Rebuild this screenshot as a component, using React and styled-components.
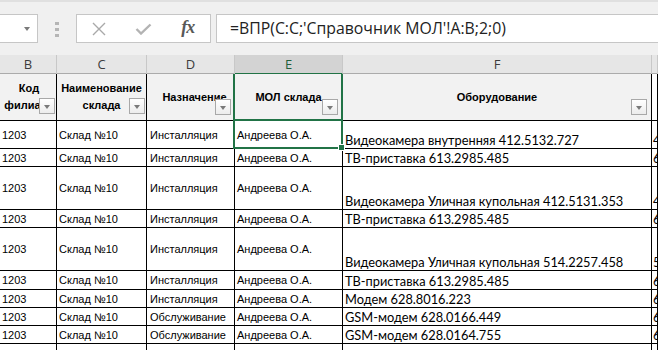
import React from 'react';
import styled, { createGlobalStyle } from 'styled-components';

const GlobalStyle = createGlobalStyle`
  html, body { margin: 0; padding: 0; background: #fff; }
  body {
    width: 658px;
    height: 350px;
    overflow: hidden;
    font-family: "Liberation Sans", Arial, sans-serif;
  }
`;

const COLS = '57px 90px 88px 108px 309px 1fr';
const GREEN = '#217346';

const rows = [
  { h: 28, d: 'Инсталляция', f: 'Видеокамера внутренняя 412.5132.727', g: '4', sel: true },
  { h: 18, d: 'Инсталляция', f: 'ТВ-приставка 613.2985.485', g: '6' },
  { h: 43, d: 'Инсталляция', f: 'Видеокамера Уличная купольная 412.5131.353', g: '4' },
  { h: 18, d: 'Инсталляция', f: 'ТВ-приставка 613.2985.485', g: '6' },
  { h: 43, d: 'Инсталляция', f: 'Видеокамера Уличная купольная 514.2257.458', g: '5' },
  { h: 19, d: 'Инсталляция', f: 'ТВ-приставка 613.2985.485', g: '6' },
  { h: 18, d: 'Инсталляция', f: 'Модем 628.8016.223', g: '6' },
  { h: 18, d: 'Обслуживание', f: 'GSM-модем 628.0166.449', g: '6' },
  { h: 18, d: 'Обслуживание', f: 'GSM-модем 628.0164.755', g: '6' },
];

const Page = styled.div`
  width: 658px;
  height: 350px;
  overflow: hidden;
  display: flex;
  flex-direction: column;
`;

const Toolbar = styled.div`
  display: flex;
  align-items: flex-start;
  height: 55px;
  flex: none;
  box-sizing: border-box;
  padding-top: 12px;
  background: #f0f0f0;
  border-top: 2px solid #e0e0e0;
`;

const NameBox = styled.div`
  margin-left: -1px;
  width: 39px;
  height: 29px;
  box-sizing: border-box;
  background: #fff;
  border: 1px solid #c6c6c6;
  display: flex;
  align-items: center;
  justify-content: flex-end;
  padding-right: 7px;
`;

const Caret = styled.span`
  width: 0;
  height: 0;
  border-left: 3.5px solid transparent;
  border-right: 3.5px solid transparent;
  border-top: 4px solid #7a7a7a;
`;

const Grip = styled.div`
  margin-left: 17px;
  padding-top: 8px;
  display: flex;
  flex-direction: column;
  gap: 3px;
`;

const Dot = styled.span`
  width: 4px;
  height: 3px;
  background: #b5b5b5;
`;

const FxBox = styled.div`
  margin-left: 17px;
  width: 135px;
  height: 29px;
  box-sizing: border-box;
  background: #fff;
  border: 1px solid #c6c6c6;
  display: flex;
  align-items: center;
`;

const FxSlot = styled.div`
  width: 45px;
  height: 100%;
  display: flex;
  align-items: center;
  justify-content: center;
`;

const FxLabel = styled.span`
  font-family: "Liberation Serif", "Times New Roman", serif;
  font-style: italic;
  font-weight: bold;
  font-size: 18px;
  color: #595959;
  letter-spacing: -1px;
  margin-top: -2px;
`;

const Formula = styled.div`
  margin-left: 5px;
  margin-right: -2px;
  flex: 1;
  height: 29px;
  box-sizing: border-box;
  background: #fff;
  border: 1px solid #c6c6c6;
  padding-left: 13px;
  font-family: "Open Sans", "Noto Sans", sans-serif;
  font-size: 15.8px;
  line-height: 27px;
  color: #222;
  white-space: nowrap;
`;

const LetterRow = styled.div`
  display: grid;
  grid-template-columns: ${COLS};
  height: 19px;
  flex: none;
  box-sizing: border-box;
  background: #e6e6e6;
  border-bottom: 1px solid #ababab;
`;

const Letter = styled.div`
  border-right: 1px solid #c8c8c8;
  text-align: center;
  font-family: "Open Sans", "Noto Sans", sans-serif;
  font-size: 13px;
  line-height: 18px;
  color: ${p => (p.$active ? '#1f5f3b' : '#3c3c3c')};
  background: ${p => (p.$active ? '#d3d3d3' : 'transparent')};
  margin-bottom: ${p => (p.$active ? '-1px' : '0')};
  border-bottom: ${p => (p.$active ? `2px solid ${GREEN}` : 'none')};
`;

const Row = styled.div`
  display: grid;
  grid-template-columns: ${COLS};
  height: ${p => p.$h}px;
  flex: none;
`;

const Cell = styled.div`
  position: relative;
  box-sizing: border-box;
  border-right: 1px solid #000;
  border-bottom: 1px solid #000;
  display: flex;
  align-items: ${p => (p.$bottom ? 'flex-end' : 'center')};
  padding: 0 2px;
  white-space: nowrap;
  font-size: 11px;
  color: #000;
  background: #fff;
`;

const Clip = styled.span`
  overflow: hidden;
  display: block;
  width: 100%;
`;

const CalibriText = styled.span`
  font-family: Lato, "Open Sans", sans-serif;
  font-size: 12.8px;
  line-height: 16px;
  color: #000;
`;

const HeadCell = styled.div`
  position: relative;
  box-sizing: border-box;
  border-right: 1px solid #000;
  border-bottom: 1px solid #000;
  background: #f2f2f2;
  display: flex;
  align-items: center;
  justify-content: center;
  text-align: center;
  overflow: hidden;
  font-weight: bold;
  font-size: 11px;
  line-height: 17px;
  color: #000;
  padding: ${p => p.$pad || '0'};
`;

const FilterBtn = styled.span`
  position: absolute;
  right: ${p => p.$r}px;
  bottom: ${p => p.$b}px;
  width: 16px;
  height: 16px;
  box-sizing: border-box;
  border: 1px solid #a8a8a8;
  background: linear-gradient(#ffffff, #ececec);
  &::after {
    content: '';
    position: absolute;
    left: 3.5px;
    top: 6px;
    border-left: 3.5px solid transparent;
    border-right: 3.5px solid transparent;
    border-top: 4px solid #7a7a7a;
  }
`;

const HeadMark = styled.span`
  position: absolute;
  left: -2px;
  right: -1px;
  top: 0;
  bottom: 0;
  border-left: 2px solid ${GREEN};
  border-right: 2px solid ${GREEN};
  pointer-events: none;
`;

const Selection = styled.span`
  position: absolute;
  left: -2px;
  right: -1px;
  top: -2px;
  bottom: -1px;
  border: 2px solid ${GREEN};
  pointer-events: none;
  z-index: 2;
  &::after {
    content: '';
    position: absolute;
    right: -4px;
    bottom: -4px;
    width: 5px;
    height: 5px;
    background: ${GREEN};
    border: 1px solid #fff;
  }
`;

function XIcon() {
  return (
    <svg width="16" height="14" viewBox="0 0 16 14">
      <path d="M2 1 L14 13 M14 1 L2 13" stroke="#a9a9a9" strokeWidth="1.4" fill="none" />
    </svg>
  );
}

function CheckIcon() {
  return (
    <svg width="17" height="12" viewBox="0 0 17 12">
      <path d="M1.5 6 L6 10.5 L15.5 1.5" stroke="#b3b3b3" strokeWidth="2.4" fill="none" />
    </svg>
  );
}

export default function App() {
  return (
    <Page>
      <GlobalStyle />
      <Toolbar>
        <NameBox><Caret /></NameBox>
        <Grip><Dot /><Dot /><Dot /></Grip>
        <FxBox>
          <FxSlot><XIcon /></FxSlot>
          <FxSlot><CheckIcon /></FxSlot>
          <FxSlot><FxLabel>fx</FxLabel></FxSlot>
        </FxBox>
        <Formula>=ВПР(C:C;'Справочник МОЛ'!A:B;2;0)</Formula>
      </Toolbar>

      <LetterRow>
        <Letter>B</Letter>
        <Letter>C</Letter>
        <Letter>D</Letter>
        <Letter $active>E</Letter>
        <Letter>F</Letter>
        <Letter />
      </LetterRow>

      <Row $h={47}>
        <HeadCell $pad="0 0 0 2px">Код филиала<FilterBtn $r={1} $b={6} /></HeadCell>
        <HeadCell>Наименование склада<FilterBtn $r={1} $b={6} /></HeadCell>
        <HeadCell $pad="0 0 0 8px"><Clip>Назначение</Clip><FilterBtn $r={3} $b={5} /></HeadCell>
        <HeadCell style={{ overflow: 'visible' }}>
          МОЛ склада<FilterBtn $r={4} $b={5} /><HeadMark />
        </HeadCell>
        <HeadCell>Оборудование<FilterBtn $r={4} $b={5} /></HeadCell>
        <HeadCell style={{ background: '#fff' }} />
      </Row>

      {rows.map((r, i) => (
        <Row key={i} $h={r.h}>
          <Cell>1203</Cell>
          <Cell>Склад №10</Cell>
          <Cell style={{ paddingLeft: 3 }}>{r.d}</Cell>
          <Cell>
            Андреева О.А.
            {r.sel && <Selection />}
          </Cell>
          <Cell $bottom><CalibriText>{r.f}</CalibriText></Cell>
          <Cell $bottom style={{ paddingLeft: 1, overflow: 'hidden' }}><CalibriText>{r.g}</CalibriText></Cell>
        </Row>
      ))}
      <Row $h={20}>
        <Cell /><Cell /><Cell /><Cell /><Cell /><Cell />
      </Row>
    </Page>
  );
}
